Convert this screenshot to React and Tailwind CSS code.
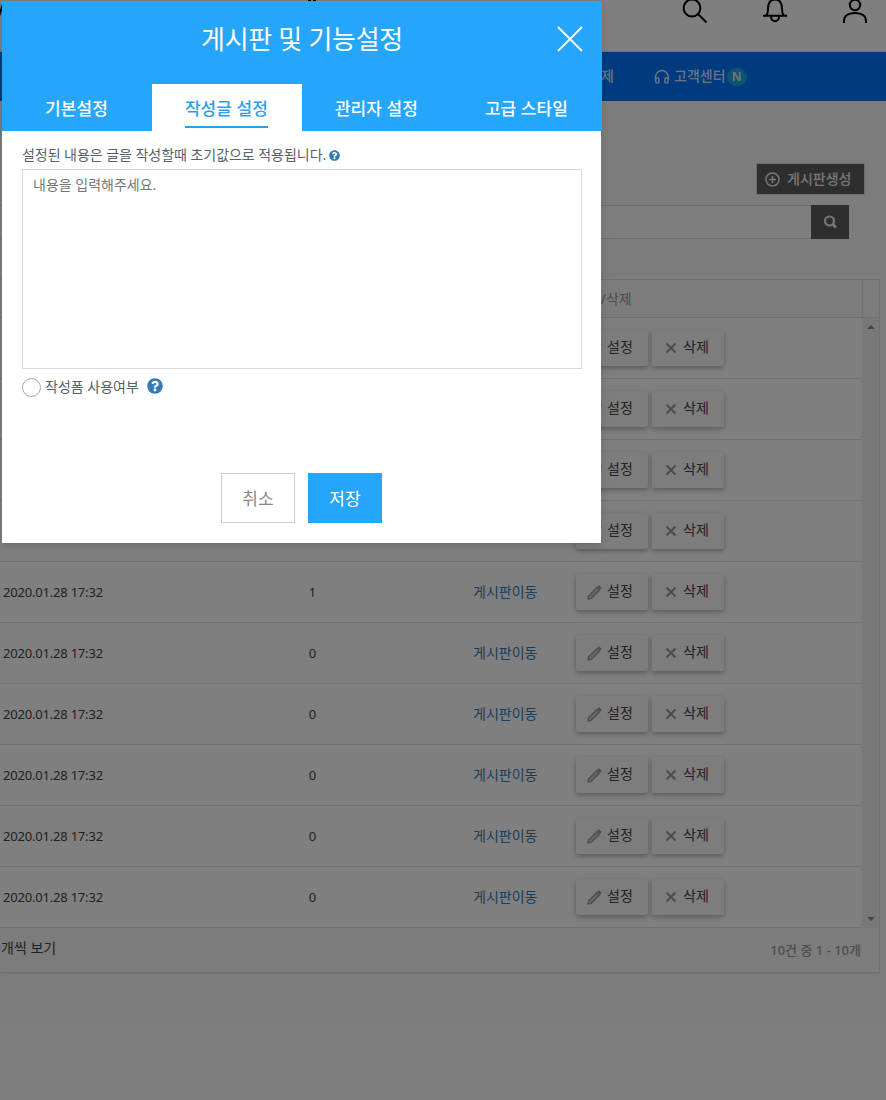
import React, { useState } from 'react';
import { FaQuestionCircle } from 'react-icons/fa';

const TABS = ['기본설정', '작성글 설정', '관리자 설정', '고급 스타일'];

const ROWS = [0, 0, 0, 0, 1, 0, 0, 0, 0, 0].map((count, i) => ({
  id: i,
  date: '2020.01.28 17:32',
  count,
}));

function PencilIcon() {
  return (
    <svg width="15" height="15" fill="none" stroke="currentColor" strokeWidth="1.2">
      <path d="M1 14l.6-3.200L9.800 2.600l2.600 2.600L4.200 13.400z" fill="#ccc" />
      <path d="M11 2l1-1 2 2-1 1z" fill="currentColor" />
    </svg>
  );
}

function CrossIcon() {
  return (
    <svg className="-mt-0.5 ml-0.5" width="12" height="12" fill="none" stroke="currentColor" strokeWidth="2">
      <path d="M1.500 1.500l9 9M10.500 1.500l-9 9" />
    </svg>
  );
}

function TopBar() {
  return (
    <header className="flex h-[52px] shrink-0 items-start border-b border-[#e6e6e6] bg-white text-black">
      {/* Tail of the site logo */}
      <svg className="shrink-0" width="320" height="20" stroke="currentColor" strokeWidth="2">
        <path d="M-1 16l4-12M308 0h3M313 0h3" />
      </svg>
      <svg className="ml-[362px] shrink-0" width="26" height="24" fill="none" stroke="currentColor" strokeWidth="2">
        <circle cx="10" cy="8" r="8.400" />
        <path d="M16 14l8.500 8.500" />
      </svg>
      <svg className="ml-[54px] shrink-0" width="26" height="24" fill="none" stroke="currentColor" strokeWidth="2">
        <path d="M1 15.800h24M4.200 15.500c1.600-1.800 1.800-3.800 1.800-6.500C6 3 8.500-.5 13-.5S20 3 20 9c0 2.700.2 4.700 1.800 6.500M9 16.500a4 4.700 0 0 0 8 0" />
      </svg>
      <svg className="ml-[54px] shrink-0" width="26" height="24" fill="none" stroke="currentColor" strokeWidth="2">
        <circle cx="13" cy="5" r="5.200" />
        <path d="M2 23v-2c0-4.500 3.500-8 11-8s11 3.500 11 8v2" />
      </svg>
    </header>
  );
}

function NavBar() {
  return (
    <nav className="flex h-[49px] shrink-0 items-center bg-[#0076ff] text-sm font-medium text-[#d8e6ff]">
      <span className="ml-[601px] w-[53px] -mt-px">제</span>
      <svg className="mt-px shrink-0" width="16" height="16" fill="none" stroke="currentColor" strokeWidth="1.500">
        <path d="M1.500 11V8a6.400 6.400 0 0 1 12.800 0v3" />
        <rect x="1.700" y="8.800" width="3.200" height="5.200" rx="1.500" />
        <rect x="10.900" y="8.800" width="3.200" height="5.200" rx="1.500" />
      </svg>
      <span className="ml-1 -mt-px">고객센터</span>
      <span className="ml-px flex h-[18px] w-5 items-center justify-center rounded-full bg-[#18a8e0] text-xs font-bold">N</span>
    </nav>
  );
}

function RowButton({ icon, label }) {
  return (
    <button className="flex h-9 w-[72px] items-center rounded-[2px] bg-[#fafafa] pl-[11px] text-sm text-[#444] shadow-[0_2px_5px_rgba(0,0,0,0.3)]">
      <span className="flex w-5 items-center pt-px text-[#999]">{icon}</span>
      <span className="-mt-[3px]">{label}</span>
    </button>
  );
}

function BoardTable() {
  return (
    <section className="mr-[6px] mt-10 flex h-[694px] shrink-0 flex-col border border-l-0 border-[#e0e0e0] shadow-[0_1px_2px_rgba(0,0,0,0.06)]">
      <div className="flex h-[38px] border-b border-[#e0e0e0]">
        <div className="flex w-[863px] items-center border-r border-[#e0e0e0] pl-[575px] text-sm text-[#999]">
          설정/삭제
        </div>
      </div>
      <div className="flex">
        <div className="w-[862px] bg-white">
          {ROWS.map(row => (
            <div key={row.id} className="flex h-[61px] items-center border-b border-[#e0e0e0] text-[#444]">
              <span className="w-[272px] pl-[3px] pt-0.5 text-[13px] tracking-[-0.200px]">{row.date}</span>
              <span className="w-[81px] pt-0.5 text-center text-[13px]">{row.count}</span>
              <a className="ml-[120px] w-[103px] text-sm text-[#337ab7]">게시판이동</a>
              <div className="flex gap-1">
                <RowButton icon={<PencilIcon />} label="설정" />
                <RowButton icon={<CrossIcon />} label="삭제" />
              </div>
            </div>
          ))}
        </div>
        <div className="flex w-[17px] flex-col items-center justify-between bg-[#f1f1f1] py-[7px]">
          <span className="h-0 w-0 border-x-4 border-b-4 border-x-transparent border-b-[#888]" />
          <span className="h-0 w-0 border-x-4 border-t-4 border-x-transparent border-t-[#888]" />
        </div>
      </div>
      <div className="flex flex-1 justify-between pl-px pr-[18px] pt-[10px] text-sm text-[#444]">
        <span>개씩 보기</span>
        <span className="mt-[3px] text-[13px] font-medium text-[#999]">10건 중 1 - 10개</span>
      </div>
    </section>
  );
}

function SettingsModal() {
  const [tab, setTab] = useState(1);

  return (
    <div className="absolute left-[2px] top-px h-[542px] w-[599px] bg-white shadow-[0_3px_8px_rgba(0,0,0,0.15)]">
      <div className="flex h-[130px] w-[600px] flex-col justify-between bg-[#26a6fa] text-white">
        <div className="grid h-[76px] grid-cols-[80px_1fr_80px] items-center">
          <h2 className="col-start-2 text-center text-[26px] leading-8 tracking-[-0.300px]">게시판 및 기능설정</h2>
          <button className="ml-[35px]">
            <svg width="26" height="26" stroke="currentColor" strokeWidth="1.800">
              <path d="M1 1l24 24M25 1L1 25" />
            </svg>
          </button>
        </div>
        <div className="flex h-[47px]">
          {TABS.map((name, i) => (
            <button
              key={name}
              onClick={() => setTab(i)}
              className={`flex w-[150px] justify-center pr-px pt-[11px] text-[17px] font-medium leading-7 tracking-[0.100px] ${tab === i ? 'bg-white text-[#2f9fe8]' : ''}`}
            >
              <span className={tab === i ? 'h-[33px] border-b-2 border-[#2f9fe8]' : ''}>{name}</span>
            </button>
          ))}
        </div>
      </div>

      <div className="px-5 pt-[14px] text-[#55606b]">
        <div className="flex h-6 items-start text-sm leading-5 tracking-[-0.040px]">
          설정된 내용은 글을 작성할때 초기값으로 적용됩니다.
          <FaQuestionCircle size={11} className="ml-[3px] mt-[5px] text-[#337ab7]" />
        </div>
        <textarea
          className="block h-[200px] w-[560px] resize-none border border-[#d9d9d9] px-[10px] py-[5px] text-sm leading-5 placeholder:text-[#777]"
          placeholder="내용을 입력해주세요."
        />
        <label className="mt-2 flex items-start text-sm leading-5">
          <span className="mr-1 mt-px h-[19px] w-[19px] rounded-full border border-[#aaa]" />
          작성폼 사용여부
          <FaQuestionCircle size={16} className="ml-2 mt-[0.500px] text-[#337ab7]" />
        </label>
      </div>

      <div className="mt-[76px] flex justify-center gap-[13px] pr-px text-[17px]">
        <button className="h-[50px] w-[74px] border border-[#ccc] pl-px pt-0.5 text-[#888]">취소</button>
        <button className="h-[50px] w-[74px] bg-[#26a6fa] pl-px pt-0.5 text-white">저장</button>
      </div>
    </div>
  );
}

export default function App() {
  return (
    <div className="relative flex h-[1100px] w-[886px] flex-col overflow-hidden whitespace-nowrap bg-[#f9f9f9] font-['Noto_Sans','Noto_Sans_CJK_KR',sans-serif]">
      <TopBar />
      <NavBar />

      {/* Toolbar */}
      <div className="mt-[62px] flex shrink-0 justify-end pr-[21px]">
        <button className="flex h-[32px] w-[109px] items-center border border-[#ddd] bg-[#5c5c5c] pl-2 text-sm font-medium text-[#eee]">
          <svg className="mr-[7px] shrink-0" width="15" height="15" fill="none" stroke="currentColor" strokeWidth="1.500">
            <circle cx="7.500" cy="7.500" r="6.500" />
            <path d="M7.500 4v7M4 7.500h7" />
          </svg>
          게시판생성
        </button>
      </div>
      <div className="mr-[37px] mt-[10px] flex h-[34px] shrink-0">
        <div className="flex-1 border-y border-[#ddd] bg-[#fdfdfd]" />
        <button className="flex w-[38px] items-center justify-center bg-[#5c5c5c] text-[#eee]">
          <svg width="14" height="14" fill="none" stroke="currentColor" strokeWidth="2.200">
            <circle cx="6.500" cy="6" r="4.500" />
            <path d="M9.500 9l3.500 3.500" strokeWidth="2.800" />
          </svg>
        </button>
      </div>

      <BoardTable />

      <div className="absolute inset-0 bg-black/50" />
      <SettingsModal />
    </div>
  );
}
